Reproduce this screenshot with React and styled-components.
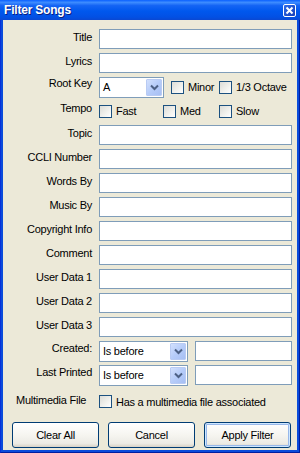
import React from "react";
import styled, { createGlobalStyle } from "styled-components";

const Global = createGlobalStyle`
  html, body { margin: 0; padding: 0; background: #ECE9D8; }
  body { width: 300px; height: 453px; overflow: hidden; }
  * { box-sizing: border-box; }
`;

const FONT = `"Liberation Sans", Arial, sans-serif`;

const Window = styled.div`
  width: 300px;
  height: 453px;
  display: flex;
  flex-direction: column;
  background: #0A4BDB;
  border-left: 1px solid #0831D9;
  border-right: 1px solid #001EA0;
  border-bottom: 1px solid #001EA0;
  font-family: ${FONT};
  font-size: 11px;
  letter-spacing: -0.25px;
  color: #000;
`;

const TitleBar = styled.div`
  height: 20px;
  flex: 0 0 20px;
  display: flex;
  align-items: center;
  justify-content: space-between;
  padding: 0 4px 0 4px;
  margin: 0 -1px;
  background: linear-gradient(
    to bottom,
    #0A60FF 0%,
    #3D8CFF 12%,
    #1464F4 28%,
    #0058EE 55%,
    #0250E4 85%,
    #0A48D2 100%
  );
`;

const TitleText = styled.span`
  color: #fff;
  font-family: ${FONT};
  font-weight: bold;
  font-size: 12px;
  letter-spacing: -0.2px;
  text-shadow: 1px 1px 0 #0A1E80;
`;

const CloseBtn = styled.div`
  width: 13px;
  height: 13px;
  border: 1px solid #fff;
  border-radius: 2px;
  background: linear-gradient(135deg, #2E6BE8, #173EB8);
  display: flex;
  align-items: center;
  justify-content: center;
`;

const Body = styled.div`
  flex: 1;
  margin: 0 2px 2px 2px;
  background: #ECE9D8;
  display: flex;
  flex-direction: column;
  padding: 9px 5px 0 0;
`;

const Form = styled.div`
  display: grid;
  grid-template-columns: 89px 193px;
  column-gap: 7px;
  row-gap: 4px;
  grid-auto-rows: 20px;
`;

const Label = styled.div`
  text-align: right;
  padding-top: ${(p) => p.$top ?? 2}px;
  line-height: 13px;
  white-space: nowrap;
`;

const LeftLabel = styled.div`
  padding-left: 13px;
  padding-top: 5px;
  white-space: nowrap;
  line-height: 13px;
`;

const TextBox = styled.div`
  width: ${(p) => p.$w || "100%"};
  height: 20px;
  border: 1px solid #7F9DB9;
  background: #fff;
`;

const Combo = styled.div`
  position: relative;
  width: ${(p) => p.$w}px;
  height: 21px;
  border: 1px solid #7F9DB9;
  background: #fff;
  display: flex;
  align-items: center;
  padding-left: 3px;
  font-size: 11px;
  flex: 0 0 auto;
`;

const ComboValue = styled.span`
  flex: 1;
  line-height: 13px;
`;

const ComboButton = styled.div`
  width: 16px;
  align-self: stretch;
  margin: 1px;
  border: 1px solid #B9CBF3;
  border-radius: 1px;
  background: linear-gradient(to bottom right, #D2E0FD 0%, #B6CCF9 50%, #A7BFF3 100%);
  display: flex;
  align-items: center;
  justify-content: center;
`;

const Inline = styled.div`
  display: flex;
  align-items: center;
  height: 20px;
`;

const Option = styled.div`
  display: flex;
  align-items: center;
  width: ${(p) => (p.$w ? `${p.$w}px` : "auto")};
  margin-left: ${(p) => p.$ml || 0}px;
  flex: 0 0 auto;
  white-space: nowrap;
`;

const Box = styled.span`
  width: 13px;
  height: 13px;
  border: 1px solid #1C5180;
  background: linear-gradient(135deg, #DCDCD7 0%, #F2F2EE 60%, #FFFFFF 100%);
  margin-right: 4px;
  flex: 0 0 13px;
`;

const MultiRow = styled.div`
  display: grid;
  grid-template-columns: 96px 1fr;
  align-items: start;
  margin-top: 4px;
  height: 26px;
`;

const MultiOption = styled(Option)`
  padding-top: 6px;
`;

const ButtonBar = styled.div`
  display: flex;
  gap: 9px;
  padding-left: 9px;
  margin-top: 7px;
`;

const Button = styled.div`
  width: 87px;
  height: 26px;
  border: 1px solid #003C74;
  border-radius: 3px;
  background: linear-gradient(to bottom, #FFFFFF 0%, #F6F5F0 50%, #ECEBE5 85%, #D8D2C6 100%);
  display: flex;
  align-items: center;
  justify-content: center;
  font-size: 11px;
  box-shadow: ${(p) =>
    p.$default ? "inset 0 0 0 1px #CEE7FF, inset 0 0 0 2px #98B8EA" : "none"};
`;

const Chevron = () => (
  <svg width="9" height="7" viewBox="0 0 9 7">
    <path d="M1 1.5 L4.5 5 L8 1.5" fill="none" stroke="#4D6185" strokeWidth="2" />
  </svg>
);

const CloseX = () => (
  <svg width="9" height="9" viewBox="0 0 9 9">
    <path d="M1.5 1.5 L7.5 7.5 M7.5 1.5 L1.5 7.5" stroke="#fff" strokeWidth="2" />
  </svg>
);

const Select = ({ w, value }) => (
  <Combo $w={w}>
    <ComboValue>{value}</ComboValue>
    <ComboButton>
      <Chevron />
    </ComboButton>
  </Combo>
);

const Check = ({ label, w, ml }) => (
  <Option $w={w} $ml={ml}>
    <Box />
    {label}
  </Option>
);

const textRows = [
  "Topic",
  "CCLI Number",
  "Words By",
  "Music By",
  "Copyright Info",
  "Comment",
  "User Data 1",
  "User Data 2",
  "User Data 3",
];

export default function App() {
  return (
    <>
      <Global />
      <Window>
        <TitleBar>
          <TitleText>Filter Songs</TitleText>
          <CloseBtn>
            <CloseX />
          </CloseBtn>
        </TitleBar>
        <Body>
          <Form>
            <Label>Title</Label>
            <TextBox />
            <Label>Lyrics</Label>
            <TextBox />
            <Label $top={0}>Root Key</Label>
            <Inline>
              <Select w={65} value="A" />
              <Check label="Minor" ml={7} w={48} />
              <Check label="1/3 Octave" />
            </Inline>
            <Label $top={1}>Tempo</Label>
            <Inline>
              <Check label="Fast" w={64} />
              <Check label="Med" w={56} />
              <Check label="Slow" />
            </Inline>
            {textRows.map((t) => (
              <React.Fragment key={t}>
                <Label>{t}</Label>
                <TextBox />
              </React.Fragment>
            ))}
            <Label $top={1}>Created:</Label>
            <Inline>
              <Select w={89} value="Is before" />
              <Option $ml={7}>
                <TextBox $w="97px" />
              </Option>
            </Inline>
            <Label $top={1}>Last Printed</Label>
            <Inline>
              <Select w={89} value="Is before" />
              <Option $ml={7}>
                <TextBox $w="97px" />
              </Option>
            </Inline>
          </Form>
          <MultiRow>
            <LeftLabel>Multimedia File</LeftLabel>
            <MultiOption>
              <Box />
              Has a multimedia file associated
            </MultiOption>
          </MultiRow>
          <ButtonBar>
            <Button>Clear All</Button>
            <Button>Cancel</Button>
            <Button $default>Apply Filter</Button>
          </ButtonBar>
        </Body>
      </Window>
    </>
  );
}
